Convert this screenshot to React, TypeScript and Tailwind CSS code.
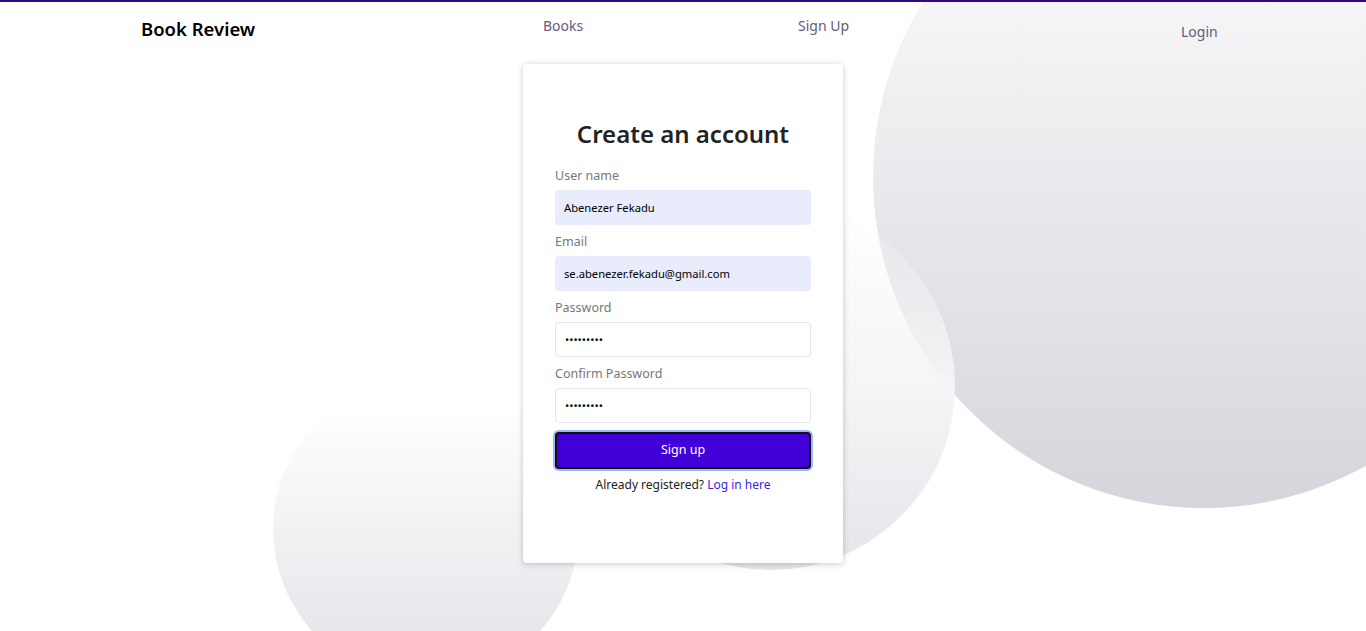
import { useState } from 'react'

const fields = [
    { label: 'User name', type: 'text', value: 'Abenezer Fekadu', filled: true },
    { label: 'Email', type: 'email', value: 'se.abenezer.fekadu@gmail.com', filled: true },
    { label: 'Password', type: 'password', value: 'abenezer1', filled: false },
    { label: 'Confirm Password', type: 'password', value: 'abenezer1', filled: false },
]

function Navbar() {
    return (
        <nav className="relative z-10 flex items-start pl-[141px] text-[14px] text-[#675a78]">
            <div className="w-[402px] pt-[15px] text-[18.5px] font-semibold leading-6 text-black">Book Review</div>
            <a href="#" className="w-[255px] pt-[14px] leading-5">Books</a>
            <a href="#" className="w-[383px] pt-[14px] leading-5">Sign Up</a>
            <a href="#" className="pt-[20px] leading-5">Login</a>
        </nav>
    )
}

export default function App() {
    const [values, setValues] = useState(fields.map((f) => f.value))

    return (
        <div
            className="relative h-[631px] overflow-hidden border-t-2 border-[#2e0a80] bg-white"
            style={{ fontFamily: '"Noto Sans", "Open Sans", sans-serif' }}
        >
            {/* background bubbles */}
            <div className="absolute left-[873px] top-[-156px] h-[662px] w-[662px] rounded-full bg-gradient-to-b from-white to-[#d6d5dc]" />
            <div className="absolute left-[273px] top-[374px] h-[306px] w-[306px] rounded-full bg-gradient-to-b from-white from-10% to-[#e2e1e7]" />
            <div className="absolute left-[587px] top-[200px] h-[368px] w-[368px] rounded-full bg-gradient-to-b from-white/0 via-[#f5f5f7] to-[#e6e5ea]" />

            <Navbar />

            <div className="relative z-10 flex justify-center pt-[22px]">
                <div className="w-[320px] h-[499px] rounded-[4px] bg-white px-8 pt-[52px] shadow-[0_1px_6px_rgba(0,0,0,0.22)]">
                    <h1 className="text-center text-[24px] font-semibold leading-9 text-[#222]">Create an account</h1>
                    <form className="mt-[14px] flex flex-col" onSubmit={(e) => e.preventDefault()}>
                        {fields.map((field, i) => (
                            <div key={field.label} className="mb-[7px]">
                                <label className="mb-1 block text-[12.5px] leading-5 text-[#777]">{field.label}</label>
                                <input
                                    type={field.type}
                                    value={values[i]}
                                    onChange={(e) => {
                                        const next = [...values]
                                        next[i] = e.target.value
                                        setValues(next)
                                    }}
                                    className={
                                        field.filled
                                            ? 'h-[35px] w-full rounded-[4px] bg-[#e8ecfd] px-[9px] text-[11.2px] text-black outline-none'
                                            : 'h-[35px] w-full rounded-[4px] border border-[#e6e6e6] bg-white px-[9px] text-[11.2px] text-black outline-none'
                                    }
                                />
                            </div>
                        ))}
                        <button
                            type="submit"
                            className="mt-[2px] h-[37px] w-full rounded-[4px] border-2 border-[#111] bg-[#4200d8] text-[12.5px] text-white ring-2 ring-[#9db8fa]"
                        >
                            Sign up
                        </button>
                        <p className="mt-[6px] text-center text-[12px] leading-5 text-[#222]">
                            Already registered? <a href="#" className="text-[#3a1cf2]">Log in here</a>
                        </p>
                    </form>
                </div>
            </div>
        </div>
    )
}
